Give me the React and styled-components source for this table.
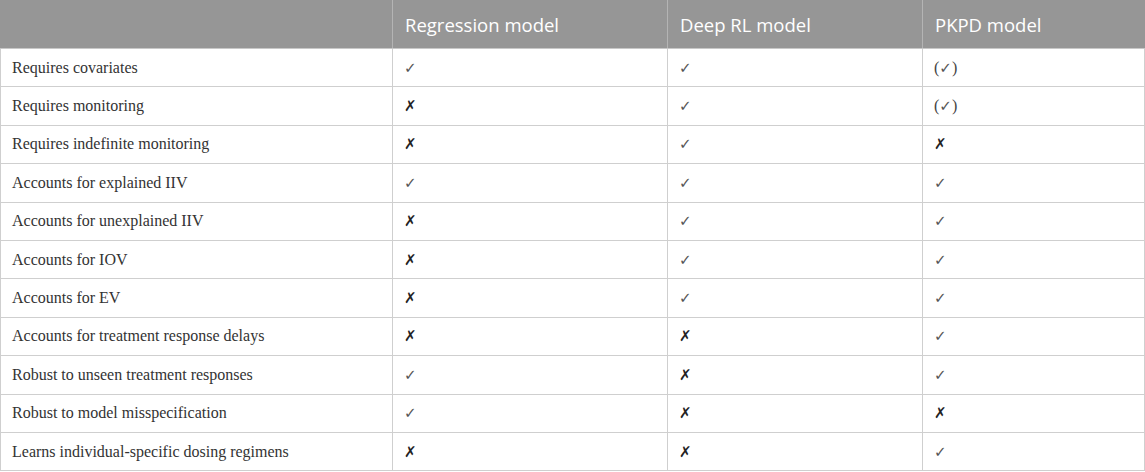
import React from 'react'
import styled, {createGlobalStyle} from 'styled-components';

const GlobalStyle = createGlobalStyle`
    html, body {
        margin: 0;
        padding: 0;
        background: #fff;
    }
`;

const TableStyled = styled.table`
    width: 1145px;
    border-collapse: collapse;
    table-layout: fixed;
    font-family: "Liberation Serif", "Times New Roman", serif;
    color: #333;
`;

const HeadCell = styled.th`
    height: 48px;
    padding: 0 12px;
    background: #969696;
    color: #fff;
    font-family: "Open Sans", "Noto Sans", sans-serif;
    font-weight: 400;
    font-size: 18.5px;
    text-align: left;
    vertical-align: middle;
    border-left: 1px solid #b4b4b4;
    border-bottom: 1px solid #c8c8c8;

    &:first-child {
        border-left: 1px solid #969696;
    }
`;

const Row = styled.tr`
    height: 38.4px;
`;

const Cell = styled.td`
    padding: 0 11px;
    font-size: 16px;
    vertical-align: middle;
    border: 1px solid #cfcfcf;
    white-space: nowrap;
`;

const Mark = styled.span`
    font-family: "DejaVu Sans", sans-serif;
    font-size: 15px;
    font-weight: ${p => p.$no ? 700 : 400};
    font-style: ${p => p.$no ? 'italic' : 'normal'};
    color: ${p => p.$no ? '#222' : '#555'};
`;

const Paren = styled.span`
    font-family: "Liberation Serif", serif;
    font-size: 16px;
    color: #444;
`;

const rows = [
    ['Requires covariates', 'y', 'y', 'p'],
    ['Requires monitoring', 'n', 'y', 'p'],
    ['Requires indefinite monitoring', 'n', 'y', 'n'],
    ['Accounts for explained IIV', 'y', 'y', 'y'],
    ['Accounts for unexplained IIV', 'n', 'y', 'y'],
    ['Accounts for IOV', 'n', 'y', 'y'],
    ['Accounts for EV', 'n', 'y', 'y'],
    ['Accounts for treatment response delays', 'n', 'n', 'y'],
    ['Robust to unseen treatment responses', 'y', 'n', 'y'],
    ['Robust to model misspecification', 'y', 'n', 'n'],
    ['Learns individual-specific dosing regimens', 'n', 'n', 'y'],
];

function Value({v}) {
    if (v === 'n') return <Mark $no>✗</Mark>;
    if (v === 'p') return <><Paren>(</Paren><Mark>✓</Mark><Paren>)</Paren></>;
    return <Mark>✓</Mark>;
}

export default function App() {
    return (
        <>
            <GlobalStyle />
            <TableStyled>
                <colgroup>
                    <col style={{width: 392}} />
                    <col style={{width: 275}} />
                    <col style={{width: 255}} />
                    <col />
                </colgroup>
                <thead>
                    <tr>
                        <HeadCell></HeadCell>
                        <HeadCell>Regression model</HeadCell>
                        <HeadCell>Deep RL model</HeadCell>
                        <HeadCell>PKPD model</HeadCell>
                    </tr>
                </thead>
                <tbody>
                    {
                        rows.map(r => (
                            <Row key={r[0]}>
                                <Cell>{r[0]}</Cell>
                                <Cell><Value v={r[1]} /></Cell>
                                <Cell><Value v={r[2]} /></Cell>
                                <Cell><Value v={r[3]} /></Cell>
                            </Row>
                        ))
                    }
                </tbody>
            </TableStyled>
        </>
    )
}
